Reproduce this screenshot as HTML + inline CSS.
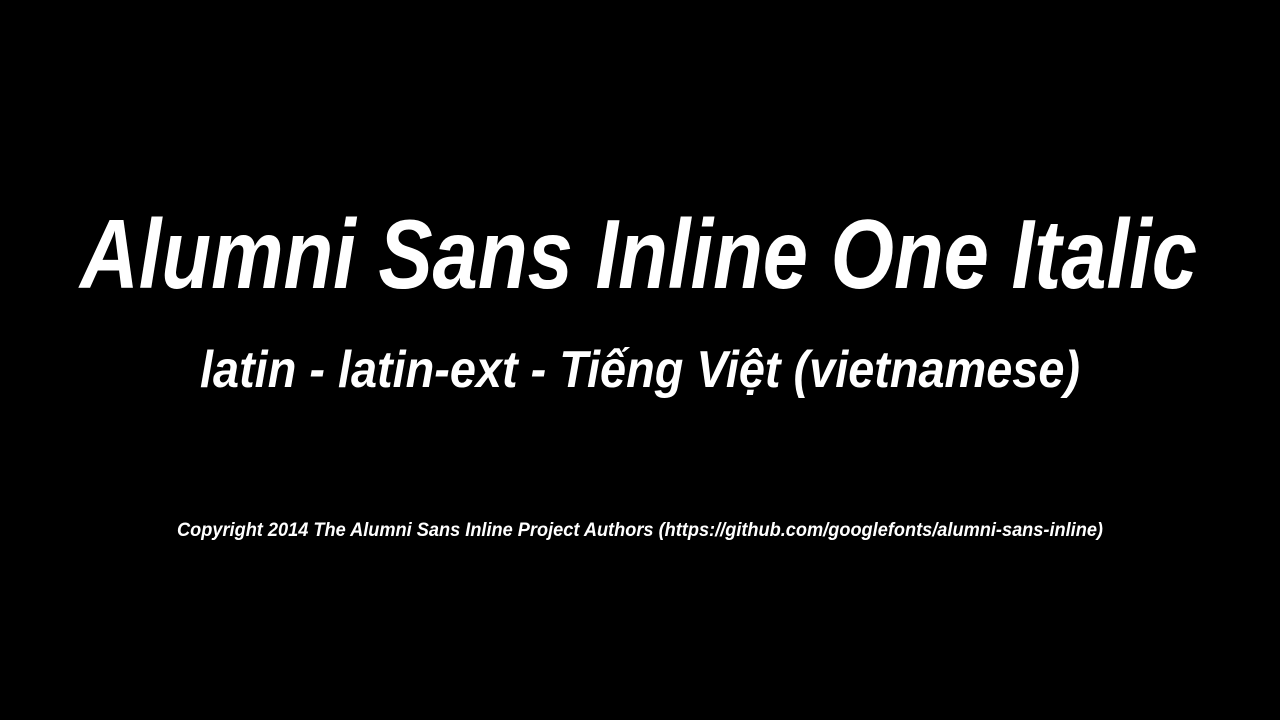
<!DOCTYPE html>
<html><head><meta charset="utf-8"><style>
html,body{margin:0;padding:0;background:#000;width:1280px;height:720px;overflow:hidden}
svg{display:block}
text{font-family:"Liberation Sans Narrow","Liberation Sans",sans-serif;font-weight:bold;font-style:italic;fill:#fff}
</style></head><body>
<svg width="1280" height="720" viewBox="0 0 1280 720">
<text x="80" y="288" font-size="98" textLength="1117" lengthAdjust="spacingAndGlyphs">Alumni Sans Inline One Italic</text>
<text x="200" y="387" font-size="52" textLength="880" lengthAdjust="spacingAndGlyphs">latin - latin-ext - Tiếng Việt (vietnamese)</text>
<text x="177" y="536" font-size="19" textLength="926" lengthAdjust="spacingAndGlyphs">Copyright 2014 The Alumni Sans Inline Project Authors (https://github.com/googlefonts/alumni-sans-inline)</text>
</svg>
</body></html>
